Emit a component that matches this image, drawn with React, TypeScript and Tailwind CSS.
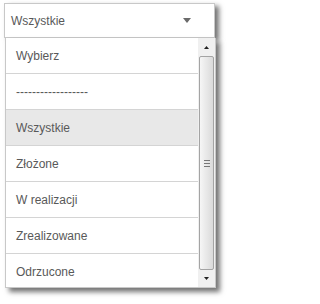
const options = [
  "Wybierz",
  "------------------",
  "Wszystkie",
  "Złożone",
  "W realizacji",
  "Zrealizowane",
  "Odrzucone",
];

const selected = "Wszystkie";

const App = () => {
  return (
    <div className="min-h-[304px] w-[229px] bg-white pl-[4px] pt-[3px] font-['Liberation_Sans',Arial,sans-serif] text-[12px] text-[#595959]">
      <div className="relative w-[211px]">
        {/* select box */}
        <div className="flex h-[35px] items-center justify-between border border-[#c8c8c8] bg-white pl-[6px] pr-[23px] shadow-[4px_3px_5px_rgba(0,0,0,0.55)]">
          <span>{selected}</span>
          <svg width="8" height="5" viewBox="0 0 8 5">
            <path d="M0 0h8L4 5z" fill="#6a6a6a" />
          </svg>
        </div>

        {/* dropdown list */}
        <div className="ml-[1px] flex h-[250px] w-[211px] overflow-hidden border border-t-0 border-[#c8c8c8] bg-white shadow-[4px_4px_5px_rgba(0,0,0,0.55)]">
          <ul className="flex-1">
            {options.map((opt) => (
              <li
                key={opt}
                className={`flex h-[36px] items-center border-b border-[#d4d4d4] pl-[10px] ${
                  opt === selected ? "bg-[#e8e8e8]" : "bg-white"
                }`}
              >
                {opt}
              </li>
            ))}
          </ul>

          {/* scrollbar */}
          <div className="flex w-[17px] flex-col bg-[#f0f0f0] px-[1px]">
            <div className="flex h-[18px] items-center justify-center">
              <svg width="5" height="3" viewBox="0 0 5 3">
                <path d="M0 3h5L2.5 0z" fill="#222" />
              </svg>
            </div>
            <div className="flex flex-1 items-center justify-center rounded-[2px] border border-[#a4a4a4] bg-gradient-to-r from-[#f6f6f6] to-[#dadada]">
              <div className="flex flex-col gap-[2px]">
                <div className="h-[1px] w-[6px] bg-[#777]" />
                <div className="h-[1px] w-[6px] bg-[#777]" />
                <div className="h-[1px] w-[6px] bg-[#777]" />
              </div>
            </div>
            <div className="flex h-[17px] items-center justify-center">
              <svg width="5" height="3" viewBox="0 0 5 3">
                <path d="M0 0h5L2.5 3z" fill="#222" />
              </svg>
            </div>
          </div>
        </div>
      </div>
    </div>
  );
};

export default App;
